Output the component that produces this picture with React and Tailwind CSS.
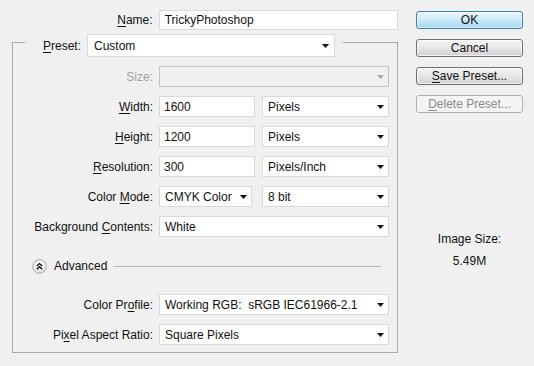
import React from "react";

const Arrow = ({ disabled }) => (
  <svg width="7" height="4" viewBox="0 0 7 4" className="shrink-0">
    <polygon points="0,0 7,0 3.5,4" fill={disabled ? "#a8a8a8" : "#111"} />
  </svg>
);

const U = ({ children }) => (
  <span className="underline underline-offset-[2px] decoration-[1px]">{children}</span>
);

const Input = ({ w, children }) => (
  <div className={`${w} h-[21px] bg-white border border-[#dadada] flex items-center pl-[4px] shrink-0`}>
    {children}
  </div>
);

const Select = ({ w, children, disabled }) => (
  <div
    className={`${w} h-[21px] ${disabled ? "bg-[#f0f0f0] border-[#c4c4c4]" : "bg-white border-[#dadada]"} border flex items-center pl-[5px] pr-[4px] shrink-0`}
  >
    <span className="flex-1 whitespace-nowrap">{children}</span>
    <Arrow disabled={disabled} />
  </div>
);

const Row = ({ label, disabled, children }) => (
  <div className="flex items-center h-[21px]">
    <div className={`w-[140px] text-right whitespace-nowrap ${disabled ? "text-[#a0a0a0]" : ""}`}>{label}</div>
    <div className="ml-[6px] flex items-center">{children}</div>
  </div>
);

const AdvIcon = () => (
  <svg width="15" height="15" viewBox="0 0 15 15" className="shrink-0">
    <defs>
      <linearGradient id="ag" x1="0" y1="0" x2="0" y2="1">
        <stop offset="0" stopColor="#ffffff" />
        <stop offset="1" stopColor="#e2e2e2" />
      </linearGradient>
    </defs>
    <circle cx="7.5" cy="7.5" r="6.8" fill="url(#ag)" stroke="#a3a3a3" strokeWidth="1" />
    <polyline points="4.8,7 7.5,4.6 10.2,7" fill="none" stroke="#111" strokeWidth="1.4" />
    <polyline points="4.8,10.2 7.5,7.8 10.2,10.2" fill="none" stroke="#111" strokeWidth="1.4" />
  </svg>
);

export default function App() {
  return (
    <div className="w-[534px] h-[366px] bg-[#f0f0f0] flex font-['Liberation_Sans',Arial,sans-serif] text-[12px] leading-[14px] text-[#111] overflow-hidden">
      <div className="w-[398px] pl-[12px] pt-[10px] shrink-0">
        <div className="flex items-center h-[20px]">
          <div className="w-[141px] text-right">
            <U>N</U>ame:
          </div>
          <div className="ml-[6px] w-[240px] h-[20px] bg-white border border-[#dadada] flex items-center pl-[5px]">
            TrickyPhotoshop
          </div>
        </div>

        <div className="mt-[12px] w-[386px] border border-[#a9a9a9] pb-[7px]">
          <div className="-mt-[9px] ml-[12px] w-fit flex items-center bg-[#f0f0f0] pl-[18px] pr-[8px]">
            <div className="w-[44px]">
              <U>P</U>reset:
            </div>
            <div className="w-[248px] h-[23px] bg-white border border-[#dadada] flex items-center pl-[6px] pr-[5px]">
              <span className="flex-1">Custom</span>
              <Arrow />
            </div>
          </div>

          <div className="mt-[9px] flex flex-col gap-[9px]">
            <Row label="Size:" disabled>
              <Select w="w-[230px]" disabled></Select>
            </Row>
            <Row label={<><U>W</U>idth:</>}>
              <Input w="w-[96px]">1600</Input>
              <div className="ml-[7px]"><Select w="w-[127px]">Pixels</Select></div>
            </Row>
            <Row label={<><U>H</U>eight:</>}>
              <Input w="w-[96px]">1200</Input>
              <div className="ml-[7px]"><Select w="w-[127px]">Pixels</Select></div>
            </Row>
            <Row label={<><U>R</U>esolution:</>}>
              <Input w="w-[96px]">300</Input>
              <div className="ml-[7px]"><Select w="w-[127px]">Pixels/Inch</Select></div>
            </Row>
            <Row label={<>Color <U>M</U>ode:</>}>
              <Select w="w-[93px]">CMYK Color</Select>
              <div className="ml-[10px]"><Select w="w-[127px]">8 bit</Select></div>
            </Row>
            <Row label={<>Background <U>C</U>ontents:</>}>
              <Select w="w-[230px]">White</Select>
            </Row>
          </div>

          <div className="mt-[22px] h-[14px] flex items-center ml-[19px] mr-[16px]">
            <AdvIcon />
            <span className="ml-[7px]">Advanced</span>
            <div className="ml-[6px] flex-1 h-px bg-[#b5b5b5]" />
          </div>

          <div className="mt-[21px] flex flex-col gap-[9px]">
            <Row label={<>Color Pr<U>o</U>file:</>}>
              <Select w="w-[230px]">Working RGB:&nbsp; sRGB IEC61966-2.1</Select>
            </Row>
            <Row label={<>Pi<U>x</U>el Aspect Ratio:</>}>
              <Select w="w-[230px]">Square Pixels</Select>
            </Row>
          </div>
        </div>
      </div>

      <div className="pl-[18px] pt-[11px] flex flex-col w-[125px]">
        <div className="flex flex-col gap-[10px]">
          <div className="w-[107px] h-[18px] rounded-[3px] border border-[#3c7fb1] bg-gradient-to-b from-[#ecf7fd] via-[#c9e8f8] to-[#a4d6f1] flex items-center justify-center shadow-[inset_0_0_0_1px_rgba(255,255,255,0.6)]">
            OK
          </div>
          <div className="w-[107px] h-[18px] rounded-[3px] border border-[#707070] bg-gradient-to-b from-[#f4f4f4] via-[#e6e6e6] to-[#d2d2d2] flex items-center justify-center shadow-[inset_0_0_0_1px_rgba(255,255,255,0.7)]">
            Cancel
          </div>
          <div className="w-[107px] h-[18px] rounded-[3px] border border-[#707070] bg-gradient-to-b from-[#f4f4f4] via-[#e6e6e6] to-[#d2d2d2] flex items-center justify-center shadow-[inset_0_0_0_1px_rgba(255,255,255,0.7)]">
            <span><U>S</U>ave Preset...</span>
          </div>
          <div className="w-[107px] h-[18px] rounded-[3px] border border-[#adb2b5] bg-[#f4f4f4] flex items-center justify-center text-[#8a8a8a]">
            <span><U>D</U>elete Preset...</span>
          </div>
        </div>
        <div className="w-[107px] mt-[119px] text-center">Image Size:</div>
        <div className="w-[107px] mt-[8px] text-center">5.49M</div>
      </div>
    </div>
  );
}
